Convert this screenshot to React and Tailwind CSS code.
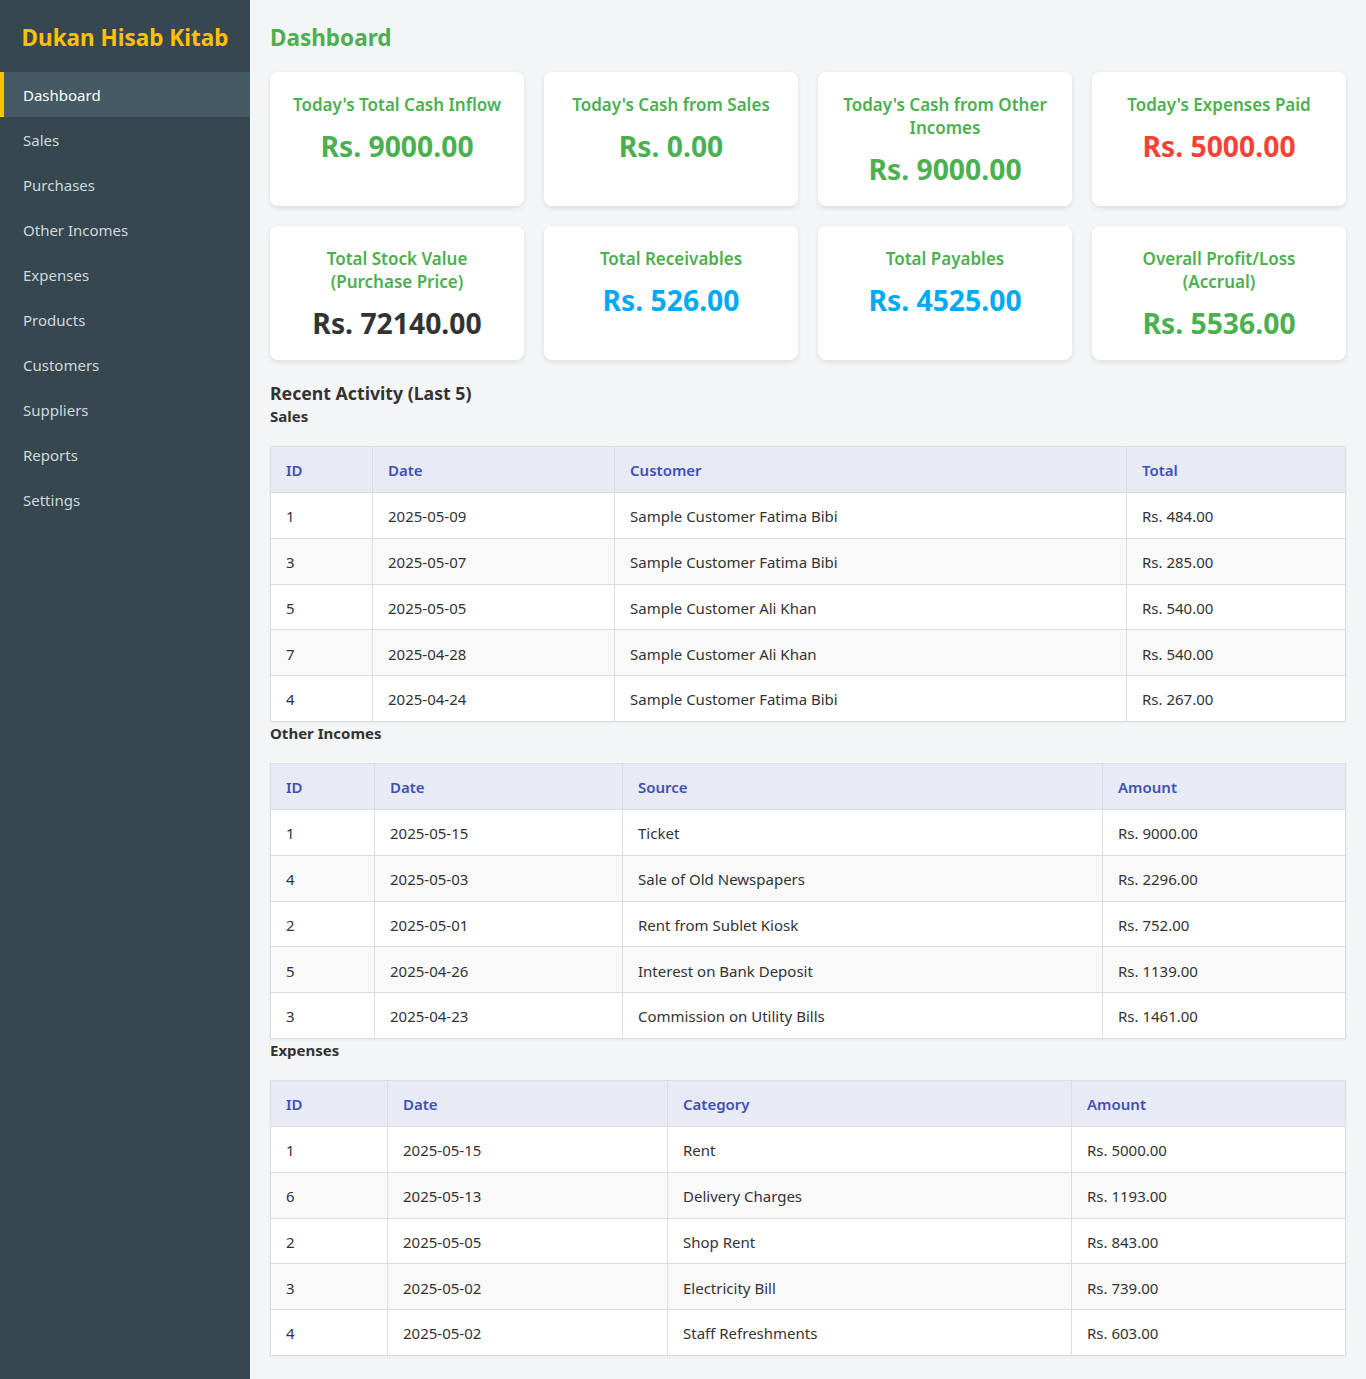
import React from "react";

const nav = ["Dashboard","Sales","Purchases","Other Incomes","Expenses","Products","Customers","Suppliers","Reports","Settings"];

const cards1 = [
  { t: "Today's Total Cash Inflow", v: "Rs. 9000.00", c: "text-[#4caf50]" },
  { t: "Today's Cash from Sales", v: "Rs. 0.00", c: "text-[#4caf50]" },
  { t: "Today's Cash from Other Incomes", v: "Rs. 9000.00", c: "text-[#4caf50]" },
  { t: "Today's Expenses Paid", v: "Rs. 5000.00", c: "text-[#f44336]" },
];
const cards2 = [
  { t: "Total Stock Value (Purchase Price)", v: "Rs. 72140.00", c: "text-[#333333]" },
  { t: "Total Receivables", v: "Rs. 526.00", c: "text-[#03a9f4]" },
  { t: "Total Payables", v: "Rs. 4525.00", c: "text-[#03a9f4]" },
  { t: "Overall Profit/Loss (Accrual)", v: "Rs. 5536.00", c: "text-[#4caf50]" },
];

const tables = [
  {
    title: "Sales",
    cols: ["ID","Date","Customer","Total"],
    widths: ["w-[102px]","w-[242px]","w-[512px]",""],
    rows: [
      ["1","2025-05-09","Sample Customer Fatima Bibi","Rs. 484.00"],
      ["3","2025-05-07","Sample Customer Fatima Bibi","Rs. 285.00"],
      ["5","2025-05-05","Sample Customer Ali Khan","Rs. 540.00"],
      ["7","2025-04-28","Sample Customer Ali Khan","Rs. 540.00"],
      ["4","2025-04-24","Sample Customer Fatima Bibi","Rs. 267.00"],
    ],
  },
  {
    title: "Other Incomes",
    cols: ["ID","Date","Source","Amount"],
    widths: ["w-[104px]","w-[248px]","w-[480px]",""],
    rows: [
      ["1","2025-05-15","Ticket","Rs. 9000.00"],
      ["4","2025-05-03","Sale of Old Newspapers","Rs. 2296.00"],
      ["2","2025-05-01","Rent from Sublet Kiosk","Rs. 752.00"],
      ["5","2025-04-26","Interest on Bank Deposit","Rs. 1139.00"],
      ["3","2025-04-23","Commission on Utility Bills","Rs. 1461.00"],
    ],
  },
  {
    title: "Expenses",
    cols: ["ID","Date","Category","Amount"],
    widths: ["w-[117px]","w-[280px]","w-[404px]",""],
    rows: [
      ["1","2025-05-15","Rent","Rs. 5000.00"],
      ["6","2025-05-13","Delivery Charges","Rs. 1193.00"],
      ["2","2025-05-05","Shop Rent","Rs. 843.00"],
      ["3","2025-05-02","Electricity Bill","Rs. 739.00"],
      ["4","2025-05-02","Staff Refreshments","Rs. 603.00"],
    ],
  },
];

function Card({ t, v, c }) {
  return (
    <div className="bg-white rounded-lg shadow-[0_2px_5px_rgba(0,0,0,0.1)] h-[134px] px-5 pt-[21px] text-center">
      <div className="text-[#4caf50] font-semibold text-[17px] leading-[23px]">{t}</div>
      <div className={`${c} font-bold text-[28.3px] leading-[40px] mt-[10px]`}>{v}</div>
    </div>
  );
}

function DataTable({ title, cols, widths, rows }) {
  return (
    <div>
      <h3 className="text-[15px] font-bold text-[#333333] leading-[22px] mb-[19px]">{title}</h3>
      <table className="w-full border-collapse bg-white text-[15px] shadow-[0_1px_3px_rgba(0,0,0,0.05)]">
        <thead>
          <tr className="bg-[#e8eaf6]">
            {cols.map((c, i) => (
              <th key={c} className={`${widths[i]} border border-[#dddddd] text-left font-semibold text-[#3f51b5] px-[15px] pt-[2px] h-[46px]`}>{c}</th>
            ))}
          </tr>
        </thead>
        <tbody>
          {rows.map((r, ri) => (
            <tr key={ri} className={ri % 2 === 1 ? "bg-[#f9f9f9]" : "bg-white"}>
              {r.map((cell, ci) => (
                <td key={ci} className="border border-[#dddddd] px-[15px] pt-[2px] h-[45.8px] text-[#333333]">{cell}</td>
              ))}
            </tr>
          ))}
        </tbody>
      </table>
    </div>
  );
}

export default function App() {
  return (
    <div className="flex min-h-[1379px] font-['Noto_Sans','Open_Sans',sans-serif]">
      <aside className="w-[250px] shrink-0 bg-[#37474f]">
        <div className="h-[72px] pt-[4px] flex items-center justify-center">
          <span className="text-[#ffc107] font-bold text-[22.5px]">Dukan Hisab Kitab</span>
        </div>
        <nav>
          {nav.map((n, i) => (
            <div
              key={n}
              className={
                i === 0
                  ? "h-[45px] pt-[2px] flex items-center pl-[19px] border-l-4 border-[#ffc107] bg-[#455a64] text-white text-[15px]"
                  : "h-[45px] pt-[2px] flex items-center pl-[23px] text-[#cfd8dc] text-[15px]"
              }
            >
              {n}
            </div>
          ))}
        </nav>
      </aside>
      <main className="flex-1 bg-[#f4f5f7] px-5 pb-[22px]">
        <h1 className="h-[72px] pt-[4px] flex items-center text-[#4caf50] font-bold text-[22.5px]">Dashboard</h1>
        <div className="grid grid-cols-4 gap-5">
          {cards1.map((c) => <Card key={c.t} {...c} />)}
          {cards2.map((c) => <Card key={c.t} {...c} />)}
        </div>
        <h2 className="mt-[21px] text-[17.7px] font-bold text-[#333333] leading-[24px]">Recent Activity (Last 5)</h2>
        <div className="flex flex-col">
          {tables.map((t) => <DataTable key={t.title} {...t} />)}
        </div>
      </main>
    </div>
  );
}
